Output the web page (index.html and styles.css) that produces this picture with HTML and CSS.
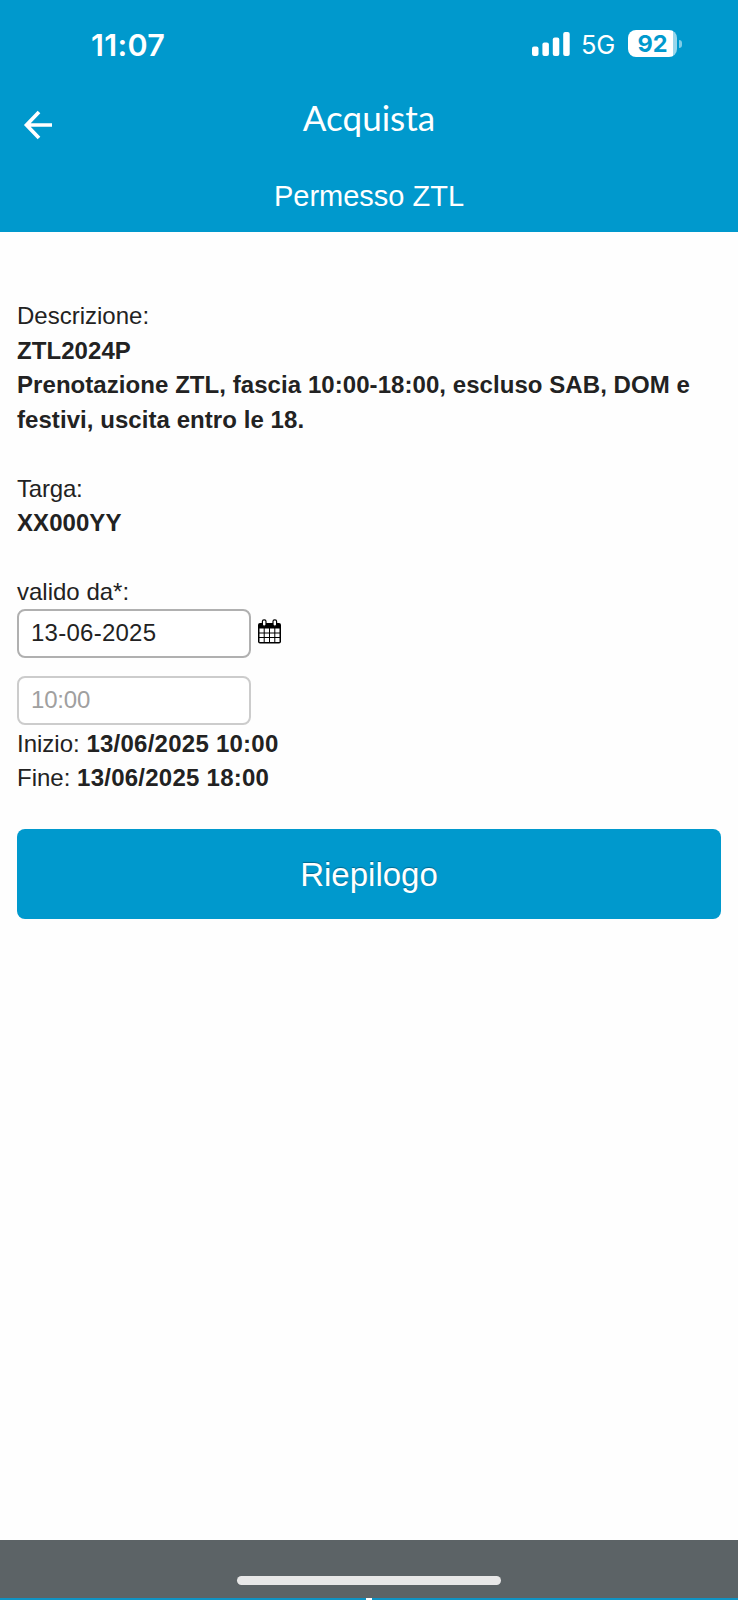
FILE: index.html
```html
<!DOCTYPE html>
<html lang="it">
<head>
  <meta charset="UTF-8" />
  <meta name="viewport" content="width=device-width, initial-scale=1.0" />
  <title>Acquista - Permesso ZTL</title>
  <link rel="stylesheet" href="styles.css">
</head>
<body>
  <header>
    <div class="status-bar">
      <span class="time">11:07</span>
      <div class="status-icons">
        <svg class="signal" width="38" height="24" viewBox="0 0 38 24" fill="#fff">
          <rect x="0" y="14.5" width="6.5" height="9.5" rx="2" />
          <rect x="10.4" y="10.5" width="6.5" height="13.5" rx="2" />
          <rect x="20.8" y="5.5" width="6.5" height="18.5" rx="2" />
          <rect x="31.2" y="0" width="6.5" height="24" rx="2" />
        </svg>
        <span class="network">5G</span>
        <div class="battery">92</div>
        <span class="battery-tip"></span>
      </div>
    </div>
    <div class="nav">
      <a class="back" href="#" aria-label="Indietro">
        <svg width="30" height="30" viewBox="0 0 30 30" fill="none" stroke="#fff" stroke-width="3.7">
          <path d="M16 2 L3.5 15 L16 28 M3.5 15 H29" />
        </svg>
      </a>
      <h1>Acquista</h1>
    </div>
    <h2>Permesso ZTL</h2>
  </header>

  <main class="content">
    <div class="field">
      <div>Descrizione:</div>
      <div><b>ZTL2024P</b></div>
      <div><b>Prenotazione ZTL, fascia 10:00-18:00, escluso SAB, DOM e<br>festivi, uscita entro le 18.</b></div>
    </div>

    <div class="field">
      <div class="plate-label">Targa:</div>
      <div><b>XX000YY</b></div>
    </div>

    <div class="validity">
      <label for="dateFrom">valido da*:</label>
      <div class="date-row">
        <input id="dateFrom" type="text" value="13-06-2025" />
        <svg class="calendar" width="23" height="25" viewBox="0 0 23 25">
          <rect x="0" y="4" width="23" height="20.5" rx="2" fill="#000" />
          <path d="M1.5 9.5h4.2v4H1.5z M6.7 9.5h4.3v4H6.7z M12 9.5h4.3v4H12z M17.3 9.5h4.2v4h-4.2z M1.5 14.5h4.2v3.6H1.5z M6.7 14.5h4.3v3.6H6.7z M12 14.5h4.3v3.6H12z M17.3 14.5h4.2v3.6h-4.2z M1.5 19.1h4.2V23H1.5z M6.7 19.1h4.3V23H6.7z M12 19.1h4.3V23H12z M17.3 19.1h4.2V23h-4.2z" fill="#fff" />
          <rect x="4.4" y="0.8" width="3.6" height="6.4" rx="1.6" fill="#fff" stroke="#000" stroke-width="1.2" />
          <rect x="15" y="0.8" width="3.6" height="6.4" rx="1.6" fill="#fff" stroke="#000" stroke-width="1.2" />
        </svg>
      </div>
      <input class="time-input" type="text" value="10:00" disabled />
      <div class="period">
        <div>Inizio: <b>13/06/2025 10:00</b></div>
        <div>Fine: <b>13/06/2025 18:00</b></div>
      </div>
    </div>

    <button class="submit">Riepilogo</button>
  </main>

  <footer>
    <div class="home-indicator"></div>
    <div class="bottom-edge"></div>
  </footer>
</body>
</html>
```

FILE: styles.css
```css
* { box-sizing: border-box; }
body {
  margin: 0;
  height: 1600px;
  display: flex;
  flex-direction: column;
  background: #fefefe;
  color: #222;
  font-family: "Liberation Sans", Arial, sans-serif;
  font-size: 24px;
  line-height: 34.5px;
}
b { letter-spacing: 0.06px; }
header {
  height: 232px;
  background: #0099cd;
  color: white;
  text-align: center;
}
.status-bar {
  display: flex;
  justify-content: space-between;
  height: 88px;
  padding: 0 56px 0 91px;
  font-family: Inter, sans-serif;
}
.time {
  font-size: 30.5px;
  font-weight: 600;
  letter-spacing: 0.3px;
  line-height: 36px;
  margin-top: 27px;
}
.status-icons {
  display: flex;
  height: 27px;
  margin-top: 30px;
}
.signal { margin-top: 1.5px; }
.network {
  width: 34px;
  margin: 1px 13px 0 11px;
  font-size: 25.5px;
  letter-spacing: -0.3px;
  line-height: 28px;
}
.battery {
  width: 49px;
  height: 27px;
  border-radius: 8px;
  background: linear-gradient(to right, white 45px, #99d6eb 45px);
  color: #0099cd;
  font-size: 23.5px;
  font-weight: 700;
  line-height: 28px;
}
.battery-tip {
  width: 3px;
  height: 8px;
  margin: 10px 0 0 2px;
  border-radius: 0 4px 4px 0;
  background: #80cce6;
}
.nav {
  display: grid;
  grid-template-columns: 78px 1fr 78px;
  height: 72px;
}
.back {
  height: 30px;
  margin: 22px 0 0 23px;
  text-align: left;
}
.back svg { display: block; }
h1, h2 { margin: 0; font-weight: 400; }
h1 {
  font-family: Lato, sans-serif;
  font-size: 35px;
  line-height: 42px;
  margin-top: 8px;
}
h2 {
  font-size: 29px;
  line-height: 36px;
  margin-top: 18px;
}
.content {
  flex: 1;
  padding: 67px 17px 0;
}
.field { margin-bottom: 34.5px; }
.plate-label { letter-spacing: -0.2px; }
label { display: block; }
.date-row {
  display: flex;
  gap: 7px;
  margin-top: -1px;
}
input {
  display: block;
  width: 234px;
  height: 49px;
  padding: 0 12px;
  border: 2px solid #b0b0b0;
  border-radius: 8px;
  background: white;
  color: #222;
  font: inherit;
  letter-spacing: 0.25px;
}
.calendar { margin-top: 10px; }
.time-input {
  margin-top: 18px;
  border-color: #ccc;
  color: #a0a0a0;
  letter-spacing: -0.2px;
}
.period { margin-top: 2px; }
.period b { letter-spacing: 0.25px; }
.submit {
  display: block;
  width: 704px;
  height: 90px;
  margin-top: 33px;
  padding: 3px 0 0;
  border: 0;
  border-radius: 8px;
  background: #0099cd;
  color: white;
  font: 33px "Liberation Sans", Arial, sans-serif;
  text-shadow: 0 -1px 1px #006a90;
}
footer {
  height: 60px;
  background: #5c6366;
}
.home-indicator {
  width: 264px;
  height: 9px;
  margin: 36px auto 13px;
  border-radius: 5px;
  background: #e8e8e8;
}
.bottom-edge {
  height: 2px;
  background: linear-gradient(to right, #0f93c4 366px, white 366px, white 372px, #0f93c4 372px);
}
```
